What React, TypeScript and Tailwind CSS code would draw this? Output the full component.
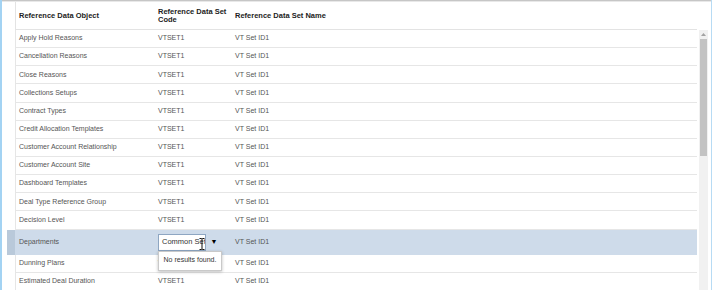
import React from 'react';

const rows = [
  'Apply Hold Reasons',
  'Cancellation Reasons',
  'Close Reasons',
  'Collections Setups',
  'Contract Types',
  'Credit Allocation Templates',
  'Customer Account Relationship',
  'Customer Account Site',
  'Dashboard Templates',
  'Deal Type Reference Group',
  'Decision Level',
  'Departments',
  'Dunning Plans',
  'Estimated Deal Duration',
];

const EDIT_ROW = 'Departments';

const IBeam: React.FC = () => (
  <svg className="absolute left-[40px] top-[3px]" width="6" height="12" viewBox="0 0 6 12">
    <path d="M0.5 0.5h2l0.5 0.5l0.5-0.5h2M3 1v10M0.5 11.5h2l0.5-0.5l0.5 0.5h2" stroke="#111" strokeWidth="1" fill="none" />
  </svg>
);

const EditCell: React.FC = () => (
  <div className="relative flex items-center">
    <div className="relative flex h-[17px] w-[48px] items-center overflow-hidden whitespace-nowrap border border-[#8ea6c2] bg-white pl-[3px] text-[7.5px] text-[#333]">
      Common Set
      <IBeam />
    </div>
    <div className="flex h-[17px] w-[16px] items-center justify-center text-[7px] text-black">▼</div>
    <div className="absolute left-0 top-[17px] z-10 flex h-[20px] w-[64px] items-center justify-center border border-[#c9c9c9] bg-white text-[7px] text-[#333] shadow-[0_1px_3px_rgba(0,0,0,0.25)]">
      No results found.
    </div>
  </div>
);

export default function App() {
  return (
    <div className="flex h-[290px] w-[714px] overflow-hidden bg-white font-['Liberation_Sans',Arial,sans-serif]">
      <div className="w-[2px] shrink-0 bg-[#a3d3f3]" />
      <div className="flex min-w-0 flex-1 flex-col">
        <div className="h-[1px] bg-[#c6c6c6]" />
        <div className="h-[1px] bg-[#e8e8e8]" />

        {/* header */}
        <div className="flex h-[28px] shrink-0 pl-[5px] pr-[14px]">
          <div className="w-[8px] shrink-0" />
          <div className="flex flex-1 border-b border-l border-[#e3e3e3] text-[7.5px] font-bold leading-[8px] text-[#222]">
            <div className="flex w-[138px] items-center pl-[3px]">Reference Data Object</div>
            <div className="flex w-[77px] items-center pl-[4px]">Reference Data Set Code</div>
            <div className="flex flex-1 items-center pl-[4px]">Reference Data Set Name</div>
          </div>
        </div>

        {/* body */}
        <div className="flex min-h-0 flex-1 pl-[5px]">
          <div className="flex flex-1 flex-col">
            {rows.map((name) => {
              const edit = name === EDIT_ROW;
              return (
                <div key={name} className={`flex shrink-0 ${edit ? 'h-[25px] bg-[#cedbea]' : 'h-[18.15px]'}`}>
                  <div className={`w-[8px] shrink-0 ${edit ? 'bg-[#b9c9da]' : ''}`} />
                  <div className={`flex flex-1 border-l text-[7px] text-[#555] ${edit ? 'border-[#cedbea]' : 'border-b border-[#e6e6e6]'}`}>
                    <div className="flex w-[138px] items-center pl-[3px]">{name}</div>
                    <div className="flex w-[77px] items-center pl-[4px]">{edit ? <EditCell /> : 'VTSET1'}</div>
                    <div className="flex flex-1 items-center pl-[4px]">VT Set ID1</div>
                  </div>
                </div>
              );
            })}
          </div>

          {/* scrollbar */}
          <div className="ml-[2px] flex w-[9px] shrink-0 flex-col bg-[#f1f1f1]">
            <div className="flex h-[9px] items-center justify-center">
              <svg width="5" height="3" viewBox="0 0 5 3">
                <path d="M0 3L2.5 0L5 3Z" fill="#a3a3a3" />
              </svg>
            </div>
            <div className="mx-auto h-[117px] w-[7px] bg-[#c3c3c3]" />
          </div>
          <div className="w-[3px] shrink-0" />
        </div>
      </div>
      <div className="w-[1px] shrink-0 bg-[#b7dbf4]" />
      <div className="w-[2px] shrink-0 bg-white" />
    </div>
  );
}
